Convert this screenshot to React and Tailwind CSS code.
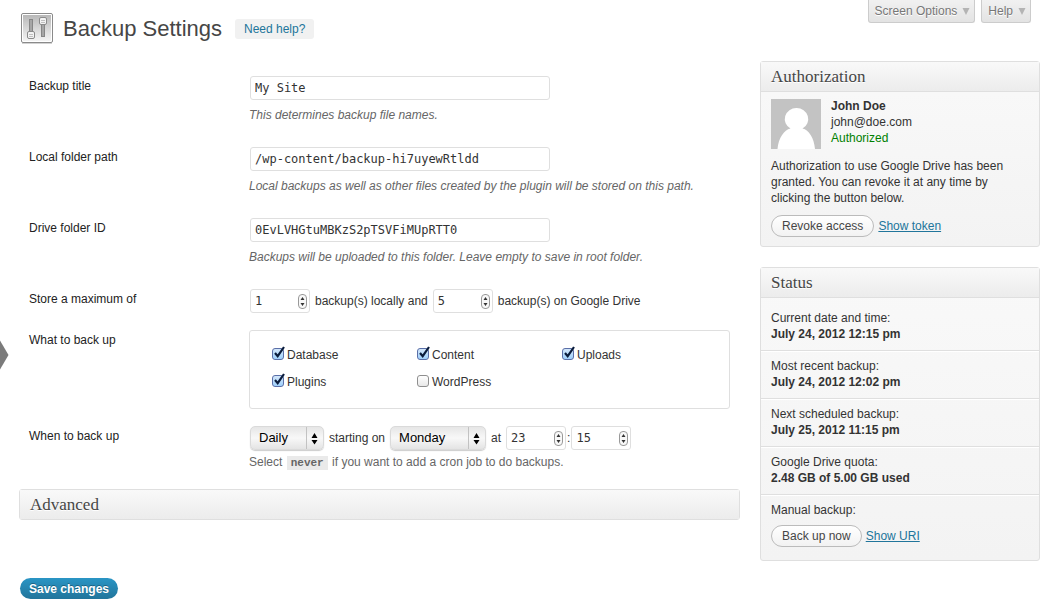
import React from "react";

const panelHead =
  "border-b border-[#dfdfdf] bg-linear-to-b from-[#f9f9f9] to-[#ececec] px-[10px] font-['Liberation_Serif',serif] text-[17px] leading-[29px] text-[#464646] [text-shadow:0_1px_0_#fff]";

function SettingsIcon() {
  return (
    <svg width="32" height="31" viewBox="0 0 32 31" aria-hidden="true">
      <defs>
        <linearGradient id="plate" x1="0" y1="0" x2="0" y2="1">
          <stop offset="0" stopColor="#b8b8b8" />
          <stop offset="1" stopColor="#f4f4f4" />
        </linearGradient>
      </defs>
      <rect x="0.5" y="0.5" width="31" height="29" rx="1.5" fill="#fff" stroke="#8a8a8a" />
      <rect x="2" y="2" width="28" height="26" fill="url(#plate)" />
      <rect x="1" y="30" width="30" height="1" fill="#d2d2d2" />
      <rect x="8.5" y="6.5" width="3" height="14" fill="#a6a6a6" stroke="#868686" />
      <rect x="20.5" y="9.5" width="3" height="14" fill="#a6a6a6" stroke="#868686" />
      <rect x="6.5" y="18.5" width="7" height="7" rx="1.5" fill="#f3f3f3" stroke="#8a8a8a" />
      <path d="M8 21.5h4M8 23.5h4" stroke="#c0c0c0" />
      <rect x="18.5" y="4.5" width="7" height="7" rx="1.5" fill="#f3f3f3" stroke="#8a8a8a" />
      <path d="M20 7.5h4M20 9.5h4" stroke="#c0c0c0" />
    </svg>
  );
}

function TabButton({ children }) {
  return (
    <button
      type="button"
      className="flex h-[23px] items-center gap-[5px] rounded-b-[3px] border border-t-0 border-[#ccc] bg-linear-to-b from-[#f1f1f1] to-[#e3e3e3] pr-1 pl-[6px] text-[12px] text-[#777] [text-shadow:0_1px_0_#fff]"
    >
      {children}
      <svg width="8" height="8" viewBox="0 0 8 8" aria-hidden="true">
        <path d="M0.5 1h7L4 8z" fill="#b4b4b4" />
      </svg>
    </button>
  );
}

function Row({ label, htmlFor, className = "", children }) {
  return (
    <div className={"flex px-[10px] py-[10px] " + className}>
      <div className="w-[220px] shrink-0 pt-[2px] leading-4 text-[#222]">
        {htmlFor ? <label htmlFor={htmlFor}>{label}</label> : label}
      </div>
      <div className="min-w-0 flex-1">{children}</div>
    </div>
  );
}

function TextRow({ id, label, value, hint }) {
  return (
    <Row label={label} htmlFor={id} className="h-[71px]">
      <input
        id={id}
        type="text"
        defaultValue={value}
        className="ml-px block h-6 w-[300px] rounded-[3px] border border-[#dfdfdf] bg-white px-1 font-['DejaVu_Sans_Mono',monospace] text-[12px] text-[#333]"
      />
      <p className="mt-[7px] leading-4 text-[#666] italic">{hint}</p>
    </Row>
  );
}

function NumberBox({ label, value }) {
  return (
    <span className="relative">
      <input
        type="number"
        aria-label={label}
        defaultValue={value}
        className="block h-6 w-[60px] appearance-none rounded-[3px] border border-[#dfdfdf] bg-white px-1 font-['DejaVu_Sans_Mono',monospace] text-[12px] text-[#333] [-moz-appearance:textfield] [&::-webkit-inner-spin-button]:appearance-none"
      />
      <svg
        className="pointer-events-none absolute top-[5px] right-[3px]"
        width="9"
        height="15"
        viewBox="0 0 9 15"
        aria-hidden="true"
      >
        <rect x="0.5" y="0.5" width="8" height="14" rx="3.5" fill="#f8f8f8" stroke="#999" />
        <path d="M4.5 3L6.5 6H2.5zM4.5 12L6.5 9H2.5z" fill="#333" />
      </svg>
    </span>
  );
}

function Choice({ label, options, width }) {
  return (
    <span className={"relative " + width}>
      <select
        aria-label={label}
        className="block h-6 w-full appearance-none rounded-[5px] border border-[#dadada] bg-linear-to-b from-[#e6e6e6] via-[#f8f8f8] to-[#e4e4e4] px-2 text-[13px] text-black shadow-[0_1px_1px_#ccc]"
      >
        {options.map((o) => (
          <option key={o}>{o}</option>
        ))}
      </select>
      <svg
        className="pointer-events-none absolute top-[1px] right-[1px]"
        width="17"
        height="22"
        viewBox="0 0 17 22"
        aria-hidden="true"
      >
        <path d="M0.5 0v22" stroke="#c2c2c2" />
        <path d="M8.500 6l3 5H5.500zM8.500 17.500l3-4.500H5.500z" fill="#000" />
      </svg>
    </span>
  );
}

function Tick({ label, checked }) {
  return (
    <label className="relative flex items-center gap-[3px] leading-[27px]">
      <input
        type="checkbox"
        defaultChecked={checked}
        className="peer mb-1 size-3 appearance-none rounded-[3px] border border-[#8f8f8f] bg-linear-to-b from-white to-[#e8e8e8] checked:border-[#5a6fa8] checked:from-[#d3e6fa] checked:to-[#9fd0fb]"
      />
      <svg
        className="pointer-events-none absolute top-[3px] left-0 hidden peer-checked:block"
        width="14"
        height="15"
        viewBox="0 0 14 15"
        aria-hidden="true"
      >
        <path d="M3 8l2.700 3.200L12 2" fill="none" stroke="#0a1c3c" strokeWidth="2.200" />
      </svg>
      {label}
    </label>
  );
}

function PillButton({ children }) {
  return (
    <button
      type="button"
      className="h-[22px] rounded-full border border-[#bbb] bg-linear-to-b from-white to-[#f2f2f2] px-[10px] text-[12px] text-[#464646]"
    >
      {children}
    </button>
  );
}

function Panel({ title, children }) {
  return (
    <section className="rounded-[3px] border border-[#dfdfdf] bg-linear-to-b from-[#f9f9f9] to-[#f3f3f3]">
      <h2 className={panelHead}>{title}</h2>
      {children}
    </section>
  );
}

const status = [
  ["Current date and time:", "July 24, 2012 12:15 pm"],
  ["Most recent backup:", "July 24, 2012 12:02 pm"],
  ["Next scheduled backup:", "July 25, 2012 11:15 pm"],
  ["Google Drive quota:", "2.48 GB of 5.00 GB used"],
];

const parts = [
  ["Database", true],
  ["Content", true],
  ["Uploads", true],
  ["Plugins", true],
  ["WordPress", false],
];

const days = ["Monday", "Tuesday", "Wednesday", "Thursday", "Friday", "Saturday", "Sunday"];

export default function App() {
  return (
    <div className="relative min-h-screen bg-white pr-[14px] pl-[19px] font-['Liberation_Sans',Arial,sans-serif] text-[12px] text-[#333]">
      <svg className="absolute top-[340px] left-0" width="9" height="30" viewBox="0 0 9 30" aria-hidden="true">
        <path d="M0 0.5L8.500 15L0 29.500z" fill="#7b7b7b" />
      </svg>

      <header className="flex h-[61px] items-start justify-between pr-[9px]">
        <div className="flex items-center pt-[13px] pl-[2px]">
          <SettingsIcon />
          <h1 className="ml-[10px] text-[22px] leading-[29px] text-[#464646] [text-shadow:0_1px_0_#fff]">
            Backup Settings
          </h1>
          <a
            href="#help"
            className="ml-[13px] rounded-[3px] bg-[#f1f1f1] px-[9px] py-[2px] leading-4 text-[#21759b]"
          >
            Need help?
          </a>
        </div>
        <div className="flex gap-[6px]">
          <TabButton>Screen Options</TabButton>
          <TabButton>Help</TabButton>
        </div>
      </header>

      <div className="flex items-start gap-5">
        <form className="min-w-0 flex-1 pt-[5px]" onSubmit={(e) => e.preventDefault()}>
          <TextRow id="title" label="Backup title" value="My Site" hint="This determines backup file names." />
          <TextRow
            id="local"
            label="Local folder path"
            value="/wp-content/backup-hi7uyewRtldd"
            hint="Local backups as well as other files created by the plugin will be stored on this path."
          />
          <TextRow
            id="drive"
            label="Drive folder ID"
            value="0EvLVHGtuMBKzS2pTSVFiMUpRTT0"
            hint="Backups will be uploaded to this folder. Leave empty to save in root folder."
          />
          <Row label="Store a maximum of" className="h-[41px]">
            <div className="ml-px flex items-center gap-[5px]">
              <NumberBox label="Local backups" value="1" />
              backup(s) locally and
              <NumberBox label="Google Drive backups" value="5" />
              backup(s) on Google Drive
            </div>
          </Row>
          <Row label="What to back up" className="h-24">
            <div className="grid h-[79px] grid-cols-3 content-start rounded-[3px] border border-[#dfdfdf] px-[22px] pt-[11px]">
              {parts.map(([label, checked]) => (
                <Tick key={label} label={label} checked={checked} />
              ))}
            </div>
          </Row>
          <Row label="When to back up" className="h-[73px]">
            <div className="ml-px flex items-center gap-[5px]">
              <Choice label="Frequency" options={["Daily", "Weekly", "Monthly", "never"]} width="w-[74px]" />
              starting on
              <Choice label="Day" options={days} width="w-[96px]" />
              at
              <span className="flex items-center gap-[1px]">
                <NumberBox label="Hour" value="23" />
                :
                <NumberBox label="Minute" value="15" />
              </span>
            </div>
            <p className="mt-1 leading-4 text-[#666]">
              Select{" "}
              <code className="mx-px bg-[#eaeaea] px-1 py-px font-['Liberation_Mono',monospace] text-[11px] font-bold">
                never
              </code>{" "}
              if you want to add a cron job to do backups.
            </p>
          </Row>
          <div className="rounded-[3px] border border-[#dfdfdf]">
            <h2 className={panelHead + " border-b-0"}>Advanced</h2>
          </div>
          <button
            type="submit"
            className="mt-[58px] ml-px h-[21px] rounded-full bg-linear-to-b from-[#2a95c5] to-[#21759b] px-[9px] text-[12px] font-bold text-white [text-shadow:0_-1px_0_rgba(0,0,0,0.3)]"
          >
            Save changes
          </button>
        </form>

        <aside className="flex w-[280px] shrink-0 flex-col gap-5">
          <Panel title="Authorization">
            <div className="px-[10px] pt-[6px] pb-[9px]">
              <div className="flex gap-[10px] leading-4">
                <svg className="mt-[1px]" width="50" height="50" viewBox="0 0 50 50" role="img" aria-label="Avatar">
                  <rect width="50" height="50" fill="#c3c3c3" />
                  <path
                    d="M25.500 9a11.500 11 0 0 1 6 20.500C38 31 43 39 44 50H6.500C7.500 39 13 31 19.500 29.500A11.500 11 0 0 1 25.500 9z"
                    fill="#fff"
                  />
                </svg>
                <div>
                  <strong>John Doe</strong>
                  <div>john@doe.com</div>
                  <div className="text-[#008000]">Authorized</div>
                </div>
              </div>
              <p className="mt-[9px] leading-4">
                Authorization to use Google Drive has been granted. You can revoke it at any time by clicking the
                button below.
              </p>
              <div className="mt-[9px] flex items-center gap-1">
                <PillButton>Revoke access</PillButton>
                <a href="#token" className="text-[#21759b] underline">
                  Show token
                </a>
              </div>
            </div>
          </Panel>

          <Panel title="Status">
            <div className="pt-[5px] leading-4">
              {status.map(([name, value]) => (
                <div key={name} className="border-b border-[#dfdfdf] px-[10px] pt-[7px] pb-2 shadow-[0_1px_0_#fff]">
                  <div>{name}</div>
                  <strong>{value}</strong>
                </div>
              ))}
              <div className="px-[10px] pt-[7px] pb-[13px]">
                <div>Manual backup:</div>
                <div className="mt-[7px] flex items-center gap-1">
                  <PillButton>Back up now</PillButton>
                  <a href="#uri" className="text-[#21759b] underline">
                    Show URI
                  </a>
                </div>
              </div>
            </div>
          </Panel>
        </aside>
      </div>
    </div>
  );
}
